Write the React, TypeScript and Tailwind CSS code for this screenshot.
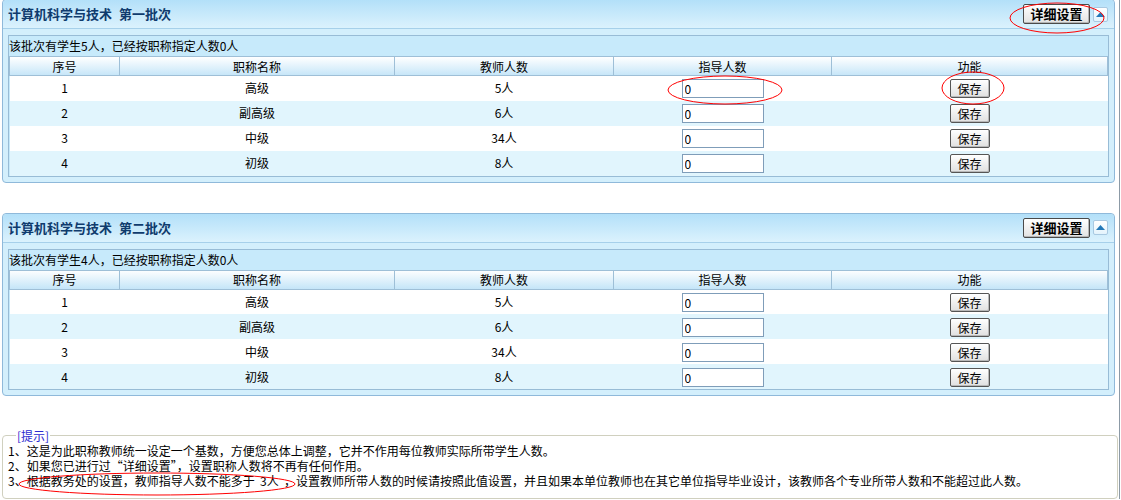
import React from 'react';

type Row = { id: number; title: string; teachers: string };

const rows: Row[] = [
  { id: 1, title: '高级', teachers: '5人' },
  { id: 2, title: '副高级', teachers: '6人' },
  { id: 3, title: '中级', teachers: '34人' },
  { id: 4, title: '初级', teachers: '8人' },
];

const CollapseIcon = () => (
  <div className="flex h-[15px] w-[15px] items-center justify-center rounded-[2px] border border-[#a9c9e1] bg-gradient-to-b from-white to-[#e3f3fc]">
    <svg width="9" height="5" viewBox="0 0 9 5">
      <path d="M4.5 0L9 5H0z" fill="#2479b8" />
    </svg>
  </div>
);

const BatchPanel = ({ major, batch, students, first }: { major: string; batch: string; students: number; first?: boolean }) => (
  <div
    className={`ml-[2px] w-[1113px] rounded-[4px] border border-[#8fb9da] bg-[#d3effc] ${
      first ? '-mt-px' : 'mt-[30px]'
    }`}
  >
    <div className="flex h-[29px] items-center justify-between rounded-t-[4px] border-b border-[#a6d0ea] bg-gradient-to-b from-[#b3e0f9] to-[#dbf2fd] pl-[5px] pr-[6px]">
      <span className="flex gap-[7px] text-[13px] font-bold text-[#0f3b6d]">
        <span>{major}</span>
        <span>{batch}</span>
      </span>
      <div className="flex items-center gap-[3px]">
        <button className="h-[20px] w-[67px] rounded-[2px] border border-[#4a4a4a] bg-gradient-to-b from-white to-[#e2e2e2] text-[13px] font-bold leading-[18px] text-black shadow-[inset_-1px_-1px_0_#b5b5b5]">
          详细设置
        </button>
        <CollapseIcon />
      </div>
    </div>
    <div className="px-[5px] pb-[5px] pt-[6px]">
      <div className="border border-[#98bcd6] bg-[#c7eafb]">
        <div className="h-[20px] text-[12px] leading-[20px] text-black">
          该批次有学生{students}人，已经按职称指定人数0人
        </div>
        <table className="w-full border-collapse text-[12px] text-black">
          <colgroup>
            <col className="w-[110px]" />
            <col className="w-[275px]" />
            <col className="w-[219px]" />
            <col className="w-[218px]" />
            <col />
          </colgroup>
          <thead>
            <tr className="h-[19px] bg-gradient-to-b from-white to-[#c4e5f8]">
              {['序号', '职称名称', '教师人数', '指导人数', '功能'].map((h) => (
                <th key={h} className="border border-[#9ebfd7] p-0 text-center font-normal leading-[17px]">
                  {h}
                </th>
              ))}
            </tr>
          </thead>
          <tbody>
            {rows.map((r) => (
              <tr key={r.id} className={`h-[25px] ${r.id % 2 === 0 ? 'bg-[#e1f5fd]' : 'bg-white'}`}>
                <td className="p-0 text-center">{r.id}</td>
                <td className="p-0 text-center">{r.title}</td>
                <td className="p-0 text-center">{r.teachers}</td>
                <td className="p-0 text-center">
                  <input
                    defaultValue="0"
                    className="h-[19px] w-[82px] border border-[#7f9db9] bg-white px-[2px] align-middle text-[12px] leading-[17px] outline-none"
                  />
                </td>
                <td className="p-0 text-center">
                  <button className="h-[19px] w-[40px] rounded-[2px] border border-[#555] bg-gradient-to-b from-white to-[#e0e0e0] align-middle text-[12px] leading-[17px] shadow-[inset_-1px_-1px_0_#b8b8b8]">
                    保存
                  </button>
                </td>
              </tr>
            ))}
          </tbody>
        </table>
      </div>
    </div>
  </div>
);

export default function App() {
  return (
    <div className="relative h-[500px] w-[1121px] overflow-hidden bg-white font-['Noto_Sans_CJK_SC',sans-serif]">
      <div className="h-[500px] w-[1120px] border-r border-[#8c9aa6]">
        <BatchPanel major="计算机科学与技术" batch="第一批次" students={5} first />
        <BatchPanel major="计算机科学与技术" batch="第二批次" students={4} />

        <fieldset className="ml-[2px] mt-[32px] w-[1116px] rounded-[4px] border border-[#d0d0bf] pb-[10px] pl-[5px] text-[12px] leading-[15px] text-black">
          <legend className="ml-[8px] px-[1px] text-[#2b2bd0]">[提示]</legend>
          <div>1、这是为此职称教师统一设定一个基数，方便您总体上调整，它并不作用每位教师实际所带学生人数。</div>
          <div>2、如果您已进行过“详细设置”，设置职称人数将不再有任何作用。</div>
          <div>
            3、根据教务处的设置，教师指导人数不能多于&nbsp;&nbsp;3人&nbsp;&nbsp;，设置教师所带人数的时候请按照此值设置，并且如果本单位教师也在其它单位指导毕业设计，该教师各个专业所带人数和不能超过此人数。
          </div>
        </fieldset>
      </div>

      <svg className="pointer-events-none absolute left-0 top-0" width="1121" height="500">
        <g fill="none" stroke="#ff0000" strokeWidth="1">
          <ellipse cx="1057" cy="18" rx="47" ry="15" />
          <ellipse cx="725" cy="90" rx="57" ry="14" />
          <ellipse cx="973" cy="88" rx="31" ry="16" />
          <ellipse cx="157" cy="484" rx="138" ry="11" />
        </g>
      </svg>
    </div>
  );
}
